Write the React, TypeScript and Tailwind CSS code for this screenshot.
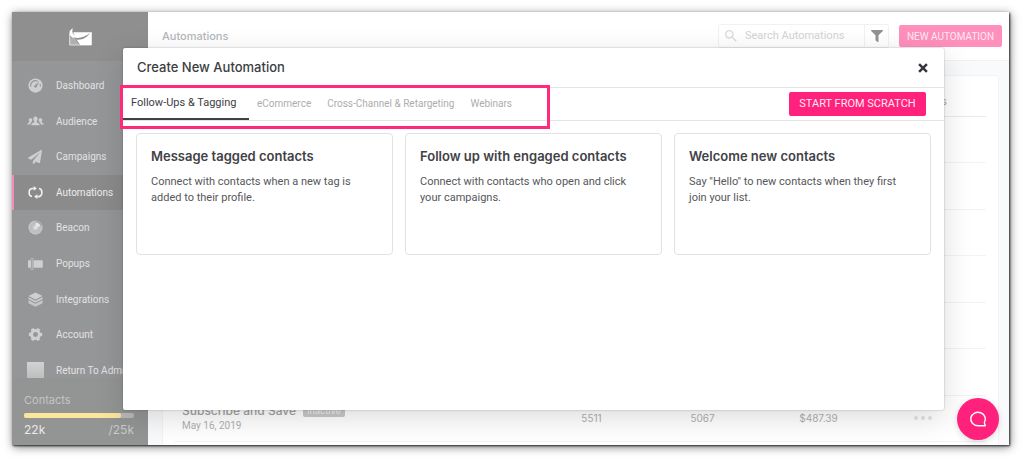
import type { ReactNode } from 'react';
import { FaFilter, FaPaperPlane } from 'react-icons/fa';
import { MdSearch } from 'react-icons/md';

const navigation: { name: string; icon: ReactNode; active?: boolean }[] = [
  { name: 'Dashboard', icon: <GaugeIcon /> },
  { name: 'Audience', icon: <PeopleIcon /> },
  { name: 'Campaigns', icon: <FaPaperPlane className="size-[14px]" /> },
  { name: 'Automations', icon: <LoopIcon />, active: true },
  { name: 'Beacon', icon: <BeaconIcon /> },
  { name: 'Popups', icon: <PopupIcon /> },
  { name: 'Integrations', icon: <LayersIcon /> },
  { name: 'Account', icon: <GearIcon /> },
  { name: 'Return To Admin', icon: <span className="size-[17px] bg-linear-to-b from-[#d2d2d3] to-[#bdbdbe]" /> },
];

const tabs = ['Follow-Ups & Tagging', 'eCommerce', 'Cross-Channel & Retargeting', 'Webinars'];

const templates = [
  { title: 'Message tagged contacts', text: 'Connect with contacts when a new tag is added to their profile.' },
  { title: 'Follow up with engaged contacts', text: 'Connect with contacts who open and click your campaigns.' },
  { title: 'Welcome new contacts', text: 'Say "Hello" to new contacts when they first join your list.' },
];

const emptyRows = [1, 2, 3, 4, 5, 6];

function GaugeIcon() {
  return (
    <svg viewBox="0 0 16 16" className="size-[15px]">
      <circle cx="8" cy="8" r="7.6" fill="currentColor" />
      <path d="M3 9.2a5 5 0 0 1 7.200-5.700M12.800 6.200a5 5 0 0 1 .2 3" fill="none" stroke="#96979a" strokeWidth="1.100" />
      <path d="M12 3.600 9.200 9.200a1.400 1.400 0 1 1-2-1.600z" fill="#96979a" />
    </svg>
  );
}

function PeopleIcon() {
  return (
    <svg viewBox="0 0 18 10" className="h-[10px] w-[17px]" fill="currentColor">
      <path d="M9 .3c1.600 0 2.300 1.100 2.200 2.500-.1 1.200-.5 1.800-.9 2.400v.9c.3.8 3 1 3.200 3.400h-9c.2-2.400 2.900-2.600 3.200-3.400v-.9c-.4-.6-.8-1.200-.9-2.400C6.700 1.400 7.400.3 9 .3z" />
      <path d="M4.100 2c.7 0 1.300.3 1.500.9.200 1-.1 2-.6 2.600v.6L3.700 7.500v1.300H.2c.1-1.800 1.900-1.800 2.200-2.500v-.8c-.5-.6-.7-1.500-.6-2.300C2 2.400 2.900 2 4.100 2zM13.900 2c-.7 0-1.300.3-1.500.9-.2 1 .1 2 .6 2.600v.6l1.300 1.400v1.300h3.500c-.1-1.800-1.900-1.800-2.200-2.500v-.8c.5-.6.7-1.500.6-2.300C16 2.400 15.100 2 13.900 2z" />
    </svg>
  );
}

function LoopIcon() {
  return (
    <svg viewBox="0 0 16 14" className="h-[13px] w-[15px] text-[#f3f3f3]">
      <path d="M6 2.600H4.800A3.600 3.600 0 0 0 1.200 6.200v1.600a3.600 3.600 0 0 0 3 3.500M10 11.400h1.200a3.600 3.600 0 0 0 3.600-3.600V6.200a3.600 3.600 0 0 0-3-3.500" fill="none" stroke="currentColor" strokeWidth="1.700" />
      <path d="M6 0v5.200L9.400 2.600zM10 8.800V14l-3.400-2.600z" fill="currentColor" />
    </svg>
  );
}

function BeaconIcon() {
  return (
    <svg viewBox="0 0 16 16" className="size-[15px]">
      <circle cx="8" cy="8" r="7.600" fill="#c3c3c4" />
      <circle cx="8" cy="8" r="5" fill="none" stroke="#b2b3b4" strokeWidth=".7" />
      <path d="M8 8V.4A7.600 7.600 0 0 1 15.300 6z" fill="#a9aaab" />
      <path d="M8 8V2.600a5.400 5.400 0 0 1 5.200 4z" fill="#e8e8e8" />
      <circle cx="8" cy="8" r="2" fill="#e0e0e0" />
    </svg>
  );
}

function PopupIcon() {
  return (
    <svg viewBox="0 0 15 12" className="h-3 w-[15px]" fill="currentColor">
      <path d="M0 2.200h3v7.600H0zM5.500 2.200H14a.8.8 0 0 1 .8.8v6a.8.8 0 0 1-.8.8H5.500z" />
      <path d="M2.500.6c1 0 1.700.3 1.700 1v8.800c0 .7-.7 1-1.700 1M5.900.6c-1 0-1.700.3-1.700 1M4.200 10.400c0 .7.700 1 1.700 1" fill="none" stroke="currentColor" strokeWidth=".8" />
    </svg>
  );
}

function LayersIcon() {
  return (
    <svg viewBox="0 0 16 16" className="size-[15px]" fill="currentColor">
      <path d="M8 .5 15.500 4.300 8 8.100.5 4.300z" />
      <path d="M.5 5.500 8 9.300l7.500-3.800v1.900L8 11.200.5 7.400z" />
      <path d="M.5 8.600 8 12.400l7.500-3.800v3.300L8 15.700.5 11.900z" opacity=".85" />
    </svg>
  );
}

function GearIcon() {
  return (
    <svg viewBox="0 0 16 16" className="size-[15px]" fill="none" stroke="currentColor">
      <circle cx="8" cy="8" r="4.200" strokeWidth="3.200" />
      <path d="M.9 8h2.400M12.700 8h2.400M4.400 1.900l1.200 2M10.400 12.100l1.200 2M11.600 1.900l-1.200 2M5.600 12.100l-1.200 2" strokeWidth="3.400" />
    </svg>
  );
}

function Logo() {
  return (
    <svg viewBox="0 0 23 18" className="h-[18px] w-[23px]">
      <path d="M.5 9.500v7.300h9.700L5.500 10z" fill="#b0b0b0" />
      <path d="M.7 6v11h21.600V4.300" fill="none" stroke="#fff" strokeWidth=".7" />
      <path d="M4.200 4.200h18.300V17H11.200L6.500 10z" fill="#fff" />
      <path d="M4 .2C1.500 1.300 0 3.400.5 5.700.9 8 3.100 10.300 6.300 10.600L8 8C4.500 7.500 2 4.500 4 .2z" fill="#fff" />
      <path d="M3.600 8.900c5.500 2.300 12.600.4 17.200-3.900-2.300 4.200-7 6.900-12.300 6.700L5.800 10.500z" fill="#8f8f8f" />
    </svg>
  );
}

function Sidebar() {
  return (
    <aside className="flex w-[136px] shrink-0 flex-col overflow-hidden bg-[#959698]">
      <div className="flex h-[49px] shrink-0 items-center justify-center bg-[#8f8f8f]">
        <Logo />
      </div>
      <nav className="grid flex-1 auto-rows-fr pt-[7px] font-[Roboto,sans-serif]">
        {navigation.map((item) => (
          <a
            key={item.name}
            href="#"
            className={`flex items-center gap-3 border-l-2 pl-3 text-[10px] whitespace-nowrap ${
              item.active ? 'border-[#f48bb8] bg-[#8b8b8c] text-[#ececec]' : 'border-transparent text-[#e2e2e3]'
            }`}
          >
            <span className="flex w-[18px] shrink-0 justify-center text-[#cfcfd0]">{item.icon}</span>
            {item.name}
          </a>
        ))}
      </nav>
      <div className="-mt-2.5 h-[67px] shrink-0 bg-[#939594] pt-[14px] pr-[14px] pl-3 text-[#e9e9e9]">
        <div className="text-[11px] leading-4 text-[#c3c4c4]">Contacts</div>
        <div className="mt-[5px] h-[5px] rounded-xs bg-[#b9b9ba]">
          <div className="h-full w-[88%] rounded-xs bg-[#fbe69b]" />
        </div>
        <div className="flex justify-between pt-1 text-xs leading-4">
          <span>22k</span>
          <span className="text-[#c9caca]">/25k</span>
        </div>
      </div>
    </aside>
  );
}

function TopBar() {
  return (
    <header className="flex h-[49px] shrink-0 items-center justify-between border-b border-[#f1f1f2] bg-white pr-[7px] pl-[14px]">
      <h1 className="text-[11px] font-medium text-[#b3b7bb]">Automations</h1>
      <div className="flex items-center gap-2.5 font-[Roboto,sans-serif]">
        <div className="flex h-6 w-[171px] rounded-xs border border-[#f1f1f1]">
          <label className="flex min-w-0 flex-1 items-center gap-1.5 pl-1 text-[#dadada]">
            <MdSearch className="size-4 shrink-0" />
            <input
              type="search"
              aria-label="Search automations"
              placeholder="Search Automations"
              className="w-full min-w-0 text-[11px] outline-none placeholder:text-[#d3d3d3]"
            />
          </label>
          <button aria-label="Filter" className="flex w-6 items-center justify-center border-l border-[#f1f1f1] text-[#929292]">
            <FaFilter className="size-3" />
          </button>
        </div>
        <button className="h-[22px] w-[103px] rounded-xs bg-[#ff90bc] text-[10px] whitespace-nowrap text-[#ffeaf2]">NEW AUTOMATION</button>
      </div>
    </header>
  );
}

function AutomationsTable() {
  return (
    <div className="mt-[14px] mr-[10px] ml-[14px] min-h-0 flex-1 rounded-t-sm border border-b-0 border-[#f3f3f4] bg-white px-3 pb-[3px]">
      <table className="h-full w-full table-fixed text-center text-[10px] text-[#b0b0b0]">
        <colgroup>
          <col />
          <col className="w-[111px]" />
          <col className="w-[111px]" />
          <col className="w-[121px]" />
          <col className="w-[107px]" />
        </colgroup>
        <thead>
          <tr className="h-10 border-b border-[#eaeaea]">
            <td />
            <td />
            <td />
            <td />
            <th scope="col" className="pt-3 pr-[39px] text-right font-medium">
              Actions
            </th>
          </tr>
        </thead>
        <tbody>
          {emptyRows.map((row) => (
            <tr key={row} className="h-[46px] border-b border-[#f3f3f3]">
              <td colSpan={5} />
            </tr>
          ))}
          <tr className="h-[46px] border-b border-[#f3f3f3]">
            <td className="pl-[7px] text-left">
              <div className="flex items-center gap-[7px] text-xs leading-4 font-medium text-[#a2a2a2]">
                Subscribe and Save
                <span className="rounded-xs bg-[#c9c9c9] px-1 text-[9px] leading-3 text-[#eee]">Inactive</span>
              </div>
              <div className="font-[Roboto,sans-serif] leading-[14px]">May 16, 2019</div>
            </td>
            <td>5511</td>
            <td>5067</td>
            <td>$487.39</td>
            <td className="pr-5 pb-1">
              <button aria-label="More" className="inline-flex gap-[3px]">
                <span className="size-1 rounded-full bg-[#e3e3e3]" />
                <span className="size-1 rounded-full bg-[#e3e3e3]" />
                <span className="size-1 rounded-full bg-[#e3e3e3]" />
              </button>
            </td>
          </tr>
        </tbody>
      </table>
    </div>
  );
}

function CreateModal() {
  return (
    <div
      role="dialog"
      aria-label="Create New Automation"
      className="absolute top-9 right-[65px] bottom-[35px] left-[111px] rounded-xs bg-white shadow-[0_0_2px_rgba(0,0,0,0.3),0_8px_30px_rgba(0,0,0,0.14)]"
    >
      <div className="flex h-10 items-center justify-between border-b border-[#e4e4e4] pr-4 pl-[14px]">
        <h2 className="text-[13px] font-medium text-[#3b3e42]">Create New Automation</h2>
        <button aria-label="Close" className="text-[#33363b]">
          <svg viewBox="0 0 10 10" className="size-[10px]">
            <path d="m1.100 1.100 7.800 7.800m0-7.800-7.800 7.800" stroke="currentColor" strokeWidth="2.500" />
          </svg>
        </button>
      </div>
      <div className="flex h-[33px] items-center justify-between border-b border-[#e4e4e4] pr-[18px] font-[Roboto,sans-serif]">
        <div role="tablist" className="flex h-full">
          {tabs.map((tab, i) => (
            <button
              key={tab}
              role="tab"
              aria-selected={i === 0}
              className={`h-8 border-b-2 px-2 whitespace-nowrap ${
                i === 0 ? 'w-[126px] border-[#3f4145] text-left text-[11px] text-[#3b3e42]' : 'border-transparent text-[10px] text-[#adadad]'
              }`}
            >
              {tab}
            </button>
          ))}
        </div>
        <button className="h-6 w-[137px] rounded-xs bg-[#ff217c] text-[11px] whitespace-nowrap text-[#ffe9f1]">START FROM SCRATCH</button>
      </div>
      <div className="grid grid-cols-3 gap-3 px-[13px] pt-3">
        {templates.map((template) => (
          <article key={template.title} className="h-[122px] rounded-sm border border-[#e2e2e2] px-[14px] pt-[14px]">
            <h3 className="text-[13px] leading-4 font-semibold whitespace-nowrap text-[#3f4246]">{template.title}</h3>
            <p className="mt-2.5 font-[Roboto,sans-serif] text-[11px] leading-4 text-[#55575a]">{template.text}</p>
          </article>
        ))}
      </div>
      <div className="pointer-events-none absolute top-[37px] -left-[3px] h-11 w-[430px] border-3 border-[#ff2a7b]" />
    </div>
  );
}

export default function App() {
  return (
    <div className="h-screen bg-white pt-3 pr-[15px] pb-[15px] pl-3 font-[Inter,sans-serif]">
      <div className="relative flex h-full shadow-[1px_1px_2px_rgba(0,0,0,0.8),1px_2px_9px_rgba(0,0,0,0.5)]">
        <Sidebar />
        <main className="flex min-w-0 flex-1 flex-col overflow-hidden bg-[#f9fafc]">
          <TopBar />
          <AutomationsTable />
        </main>
        <CreateModal />
        <button
          aria-label="Open chat"
          className="absolute right-[10px] bottom-[5px] flex size-[42px] items-center justify-center rounded-full bg-[#ff217c] text-white shadow-[0_2px_6px_rgba(0,0,0,0.15)]"
        >
          <svg viewBox="0 0 18 18" className="size-[18px]">
            <path d="M15.200 12.600A7.300 6.700 0 1 0 9 15.700h7.300l-1-3.100" fill="none" stroke="currentColor" strokeWidth="1.400" strokeLinejoin="round" />
          </svg>
        </button>
      </div>
    </div>
  );
}
